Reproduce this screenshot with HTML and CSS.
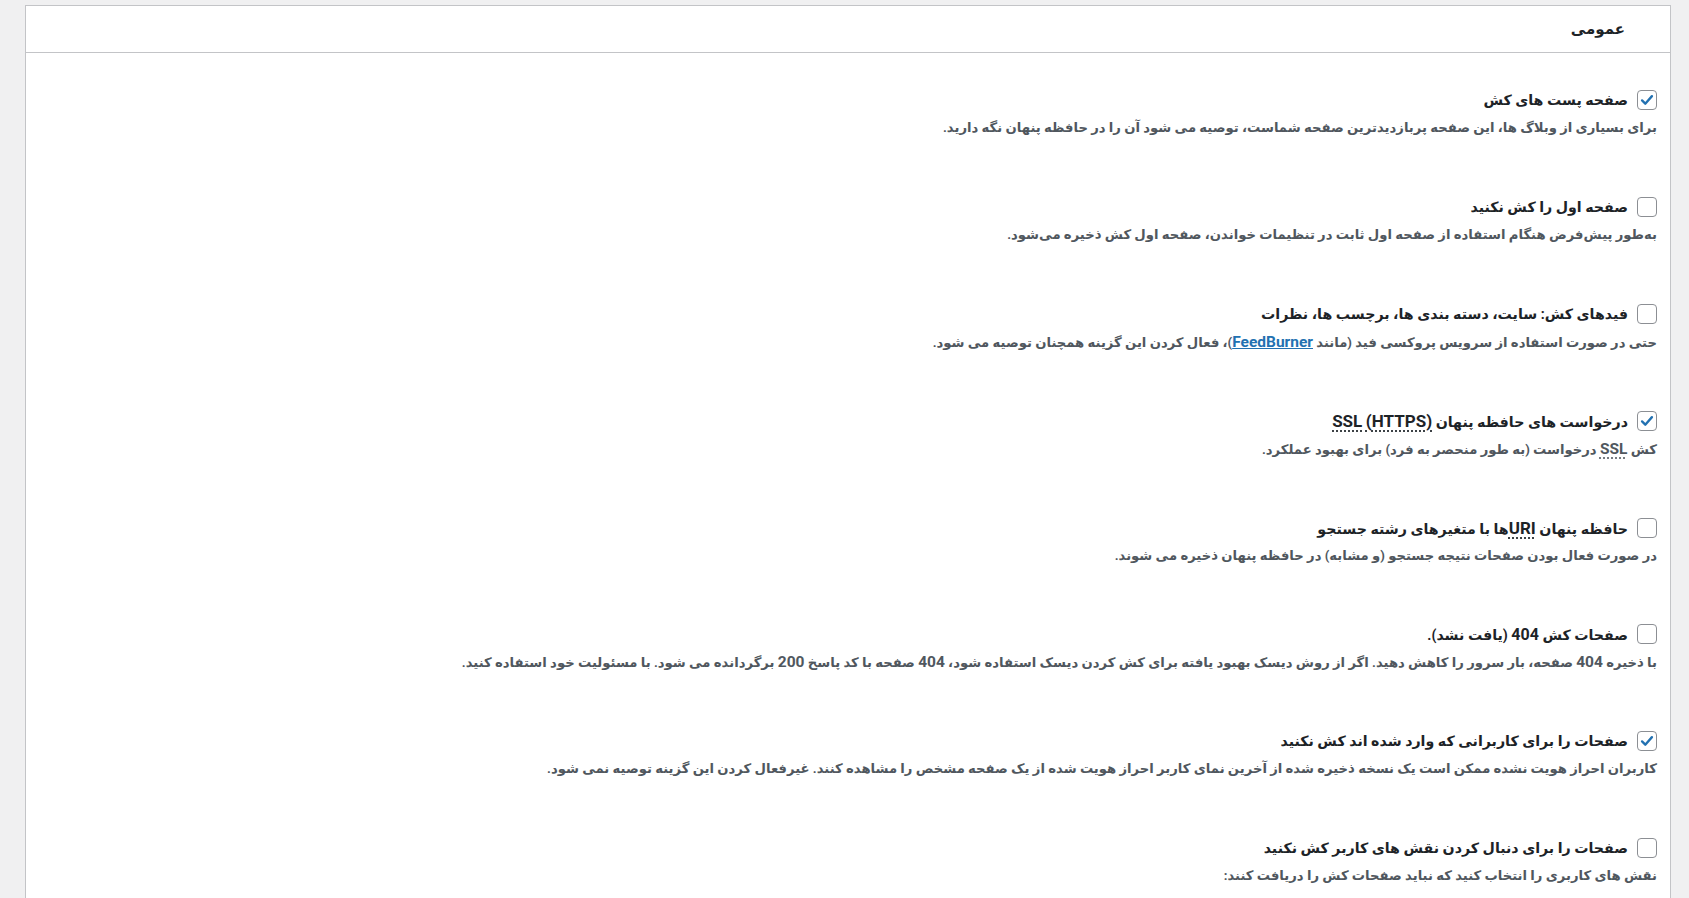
FILE: index.html
```html
<!DOCTYPE html>
<html lang="fa" dir="rtl">
<head>
<meta charset="utf-8">
<title>عمومی</title>
<link rel="stylesheet" href="styles.css">
</head>
<body>
<div class="panel">
  <div class="panel-header"><h2 class="panel-title">عمومی</h2></div>
  <div class="panel-body">
    <div class="row">
      <label class="title-line"><span class="cb checked"><svg viewBox="0 0 20 20"><path d="M4.5 10.5l3.6 3.6 7.4-8.4" /></svg></span><span class="title">صفحه پست های کش</span></label>
      <p class="desc">برای بسیاری از وبلاگ ها، این صفحه پربازدیدترین صفحه شماست، توصیه می شود آن را در حافظه پنهان نگه دارید.</p>
    </div>
    <div class="row">
      <label class="title-line"><span class="cb"></span><span class="title">صفحه اول را کش نکنید</span></label>
      <p class="desc">به‌طور پیش‌فرض هنگام استفاده از صفحه اول ثابت در تنظیمات خواندن، صفحه اول کش ذخیره می‌شود.</p>
    </div>
    <div class="row">
      <label class="title-line"><span class="cb"></span><span class="title">فیدهای کش: سایت، دسته بندی ها، برچسب ها، نظرات</span></label>
      <p class="desc">حتی در صورت استفاده از سرویس پروکسی فید (مانند <a class="link" href="#">FeedBurner</a>)، فعال کردن این گزینه همچنان توصیه می شود.</p>
    </div>
    <div class="row">
      <label class="title-line"><span class="cb checked"><svg viewBox="0 0 20 20"><path d="M4.5 10.5l3.6 3.6 7.4-8.4" /></svg></span><span class="title">درخواست های حافظه پنهان <abbr class="ab">(HTTPS)</abbr> <abbr class="ab">SSL</abbr></span></label>
      <p class="desc">کش <abbr class="ab">SSL</abbr> درخواست (به طور منحصر به فرد) برای بهبود عملکرد.</p>
    </div>
    <div class="row">
      <label class="title-line"><span class="cb"></span><span class="title">حافظه پنهان <abbr class="ab">URI</abbr>ها با متغیرهای رشته جستجو</span></label>
      <p class="desc">در صورت فعال بودن صفحات نتیجه جستجو (و مشابه) در حافظه پنهان ذخیره می شوند.</p>
    </div>
    <div class="row">
      <label class="title-line"><span class="cb"></span><span class="title">صفحات کش <span class="num">404</span> (یافت نشد).</span></label>
      <p class="desc">با ذخیره <span class="num">404</span> صفحه، بار سرور را کاهش دهید. اگر از روش دیسک بهبود یافته برای کش کردن دیسک استفاده شود، <span class="num">404</span> صفحه با کد پاسخ <span class="num">200</span> برگردانده می شود. با مسئولیت خود استفاده کنید.</p>
    </div>
    <div class="row">
      <label class="title-line"><span class="cb checked"><svg viewBox="0 0 20 20"><path d="M4.5 10.5l3.6 3.6 7.4-8.4" /></svg></span><span class="title">صفحات را برای کاربرانی که وارد شده اند کش نکنید</span></label>
      <p class="desc">کاربران احراز هویت نشده ممکن است یک نسخه ذخیره شده از آخرین نمای کاربر احراز هویت شده از یک صفحه مشخص را مشاهده کنند. غیرفعال کردن این گزینه توصیه نمی شود.</p>
    </div>
    <div class="row">
      <label class="title-line"><span class="cb"></span><span class="title">صفحات را برای دنبال کردن نقش های کاربر کش نکنید</span></label>
      <p class="desc">نقش های کاربری را انتخاب کنید که نباید صفحات کش را دریافت کنند:</p>
    </div>
  </div>
</div>
</body>
</html>
```
FILE: styles.css
```css
html, body {
  margin: 0;
  padding: 0;
  height: 100%;
  overflow: hidden;
}
body {
  background: #f0f0f1;
  font-family: Roboto, "DejaVu Sans", sans-serif;
  color: #1d2327;
}
.panel {
  margin: 5px 18px 0 0;
  width: 1646px;
  background: #fff;
  border: 1px solid #c3c4c7;
  box-sizing: border-box;
  min-height: 1000px;
}
.panel-header {
  height: 46px;
  border-bottom: 1px solid #c3c4c7;
  display: flex;
  align-items: center;
  padding-right: 45px;
}
.panel-title {
  margin: 0;
  font-size: 15px;
  font-weight: 700;
}
.panel-body {
  padding: 37px 13px 0 0;
  display: flex;
  flex-direction: column;
  gap: 58.9px;
}
.row {
  display: flex;
  flex-direction: column;
}
.title-line {
  display: flex;
  align-items: center;
  height: 20px;
  gap: 9px;
}
.cb {
  width: 20px;
  height: 20px;
  box-sizing: border-box;
  border: 1px solid #8c8f94;
  border-radius: 4px;
  background: #fff;
  flex: none;
  display: flex;
  align-items: center;
  justify-content: center;
}
.cb svg {
  width: 18px;
  height: 18px;
}
.cb svg path {
  fill: none;
  stroke: #2271b1;
  stroke-width: 2.6;
  stroke-linecap: round;
  stroke-linejoin: round;
}
.title {
  font-size: 14.2px;
  font-weight: 700;
  color: #1d2327;
}
.title .ab {
  font-size: 17px;
}
.title .num {
  font-size: 16px;
}
.desc {
  margin: 8px 0 0;
  height: 20px;
  line-height: 20px;
  font-size: 13.2px;
  font-weight: 700;
  color: #50575e;
}
.desc .link,
.desc .ab,
.desc .num {
  font-size: 15.5px;
}
.link {
  color: #2271b1;
  text-decoration: underline;
}
.ab {
  text-decoration: underline dotted;
  text-underline-offset: 4px;
}
```
